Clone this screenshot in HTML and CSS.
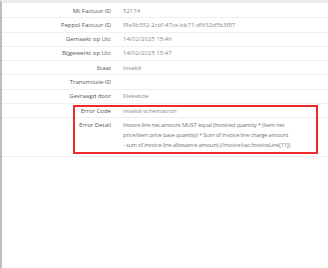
FILE: index.html
```html
<!DOCTYPE html>
<html lang="en">
<head>
    <meta charset="UTF-8">
    <meta name="viewport" content="width=device-width, initial-scale=1.0">
    <title>Factuur details</title>
    <link rel="stylesheet" href="styles.css">
</head>
<body>
    <div class="panel">
        <div class="details">
            <div class="row"><span class="label">Mt Factuur-ID</span><span class="value">52174</span></div>
            <div class="row"><span class="label">Peppol Factuur-ID</span><span class="value">f8e3b332-2cbf-47ce-bb71-df632d5b3f87</span></div>
            <div class="row"><span class="label">Gemaakt op Utc</span><span class="value">14/02/2025 15:46</span></div>
            <div class="row"><span class="label">Bijgewerkt op Utc</span><span class="value">14/02/2025 15:47</span></div>
            <div class="row"><span class="label">Staat</span><span class="value">invalid</span></div>
            <div class="row"><span class="label">Transmissie-ID</span><span class="value"></span></div>
            <div class="row"><span class="label">Gevraagd door</span><span class="value">Kiekeboe</span></div>
            <div class="row"><span class="label">Error Code</span><span class="value">invalid-schematron</span></div>
            <div class="row row-detail"><span class="label">Error Detail</span><span class="value">Invoice line net amount MUST equal (Invoiced quantity * (Item net price/item price base quantity) + Sum of invoice line charge amount <span class="nowrap">- sum</span> of invoice line allowance amount (/Invoice/cac:InvoiceLine[11])</span></div>

            <!-- highlight round the error rows -->
            <div class="highlight"></div>
        </div>
    </div>
</body>
</html>
```

FILE: styles.css
```css
body {
    margin: 0;
    background: #fff;
    font-family: "Open Sans", "Noto Sans", Arial, sans-serif;
}
.panel {
    min-height: 268px;
    border-left: 2px solid #bdbdbd;
    border-top: 3px solid #ececec;
    box-sizing: border-box;
}
.details {
    position: relative;
    padding-top: 1px;
}
.row {
    display: grid;
    grid-template-columns: 109px 1fr;
    column-gap: 12px;
    padding: 1.65px 0;
    border-bottom: 1px solid #efefef;
    font-size: 6px;
    line-height: 10px;
}
.label {
    text-align: right;
    color: #555;
}
.value {
    color: #8a8a8a;
}
.row-detail {
    padding-bottom: 6px;
}
.row-detail .value {
    color: #777;
    font-size: 5.7px;
    letter-spacing: -0.2px;
    padding-right: 33px;
}
.nowrap {
    white-space: nowrap;
}
.highlight {
    position: absolute;
    left: 71px;
    top: 102px;
    width: 245px;
    height: 49px;
    border: 2px solid #ee2a2f;
    box-sizing: border-box;
}
```
